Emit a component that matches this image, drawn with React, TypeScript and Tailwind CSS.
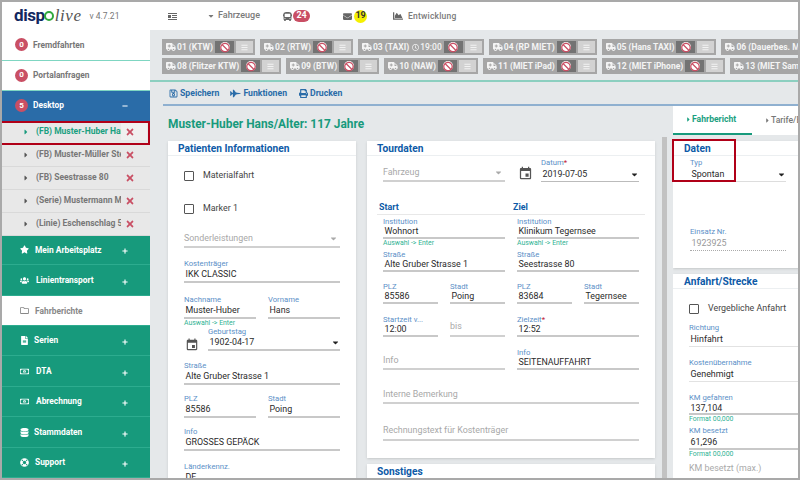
import type { ReactNode } from "react";
import {
  FaAmbulance,
  FaBan,
  FaBars,
  FaBus,
  FaCaretDown,
  FaCaretRight,
  FaChartArea,
  FaDatabase,
  FaEnvelope,
  FaFighterJet,
  FaFileAlt,
  FaLifeRing,
  FaMinus,
  FaPlus,
  FaPrint,
  FaRegClock,
  FaRegFolder,
  FaRegMoneyBillAlt,
  FaRegSave,
  FaStar,
  FaTimes,
  FaUsers,
} from "react-icons/fa";
import { MdEvent } from "react-icons/md";

const DESKTOP_ITEMS = [
  "(FB) Muster-Huber Hans",
  "(FB) Muster-Müller Stefan",
  "(FB) Seestrasse 80",
  "(Serie) Mustermann Max",
  "(Linie) Eschenschlag 5",
];

const ROW_ONE = [
  { name: "01 (KTW)" },
  { name: "02 (RTW)" },
  { name: "03 (TAXI)", time: "19:00" },
  { name: "04 (RP MIET)" },
  { name: "05 (Hans TAXI)" },
  { name: "06 (Dauerbes. MIET)" },
];

const ROW_TWO = [
  { name: "08 (Flitzer KTW)" },
  { name: "09 (BTW)" },
  { name: "10 (NAW)" },
  { name: "11 (MIET iPad)" },
  { name: "12 (MIET iPhone)" },
  { name: "13 (MIET Samsung)" },
];

function Badge({ value }: { value: number }) {
  return (
    <span className="flex h-[13px] w-[13px] shrink-0 items-center justify-center rounded-full bg-[#c94f64] text-[8px] font-bold text-white">
      {value}
    </span>
  );
}

function GreenRow({ icon, label, h, gap }: { icon: ReactNode; label: string; h: string; gap: string }) {
  return (
    <div className={`flex items-center border-b border-[#2dac8f] bg-[#179a7c] pl-[16px] pr-[22px] text-[8.4px] font-bold text-white ${h}`}>
      <span className="flex w-[12px] justify-center text-[9px]">{icon}</span>
      <span className={gap}>{label}</span>
      <FaPlus className="mt-[3px] ml-auto text-[6px]" />
    </div>
  );
}

function Sidebar() {
  return (
    <aside className="flex w-[148px] shrink-0 flex-col bg-white">
      <div className="flex h-[28px] items-center pl-[12px]">
        <span className="text-[17px] leading-none font-bold tracking-tight text-[#12275f]">disp</span>
        <span className="-ml-px h-[10px] w-[10px] rounded-full border-2 border-[#31a83c]" />
        <span className="ml-px font-['Liberation_Serif'] text-[17px] leading-none tracking-[0.6px] text-[#555] italic">live</span>
        <span className="ml-[8px] text-[8.5px] text-[#777]">v 4.7.21</span>
      </div>
      <div className="flex h-[31px] items-center gap-[5px] border-b border-[#7fd6c2] pl-[13px] text-[8.4px] font-bold text-[#777]">
        <Badge value={0} />
        Fremdfahrten
      </div>
      <div className="flex h-[30px] items-center gap-[5px] border-b border-[#7fd6c2] pl-[13px] text-[8.4px] font-bold text-[#777]">
        <Badge value={0} />
        Portalanfragen
      </div>
      <div className="flex h-[30px] items-center gap-[5px] bg-[#2a6ca8] pl-[13px] pr-[22px] text-[8.4px] font-bold text-white">
        <Badge value={5} />
        Desktop
        <FaMinus className="ml-auto text-[6px]" />
      </div>
      {DESKTOP_ITEMS.map((item, i) => (
        <div key={item} className="flex h-[23px] items-center border-b border-[#d9d9d9] bg-[#e8e8e8] pl-[20px]">
          <FaCaretRight className={`shrink-0 text-[8px] ${i === 0 ? "text-[#179a7c]" : "text-[#555]"}`} />
          <span className={`ml-[6px] w-[85px] shrink-0 overflow-hidden text-[8.5px] font-bold whitespace-nowrap ${i === 0 ? "text-[#1aa080]" : "text-[#777]"}`}>
            {item}
          </span>
          <span className={`flex h-[17px] w-[26px] items-center pl-[4px] ${i === 0 ? "bg-[#f0f0f0]" : ""}`}>
            <FaTimes className="text-[10px] text-[#c94f64]" />
          </span>
        </div>
      ))}
      <GreenRow h="h-[30px]" gap="ml-[5px]" icon={<FaStar />} label="Mein Arbeitsplatz" />
      <GreenRow h="h-[31px]" gap="ml-[6px]" icon={<FaUsers />} label="Linientransport" />
      <div className="flex h-[30px] items-center border-b border-[#2dac8f] bg-white pl-[16px] text-[8.4px] font-bold text-[#888]">
        <span className="flex w-[12px] justify-center text-[9px]">
          <FaRegFolder />
        </span>
        <span className="ml-[5px]">Fahrberichte</span>
      </div>
      <GreenRow h="h-[30px]" gap="ml-[4px]" icon={<FaFileAlt />} label="Serien" />
      <GreenRow h="h-[31px]" gap="ml-[6px]" icon={<FaRegMoneyBillAlt />} label="DTA" />
      <GreenRow h="h-[30px]" gap="ml-[6px]" icon={<FaRegMoneyBillAlt />} label="Abrechnung" />
      <GreenRow h="h-[31px]" gap="ml-[4px]" icon={<FaDatabase />} label="Stammdaten" />
      <GreenRow h="h-[30px]" gap="ml-[5px]" icon={<FaLifeRing />} label="Support" />
    </aside>
  );
}

function TopBar() {
  return (
    <div className="flex h-[28px] shrink-0 items-center bg-white text-[9px] font-medium text-[#7a7a7a]">
      <svg viewBox="0 0 9 7" className="ml-[18px] h-[7px] w-[9px]" fill="#666">
        <rect x="0" y="0" width="9" height="1" />
        <rect x="0" y="2" width="3" height="3" />
        <rect x="4" y="2" width="5" height="1" />
        <rect x="4" y="4" width="5" height="1" />
        <rect x="0" y="6" width="9" height="1" />
      </svg>
      <FaCaretDown className="ml-[30px] text-[8px]" />
      <span className="ml-[3px]">Fahrzeuge</span>
      <FaBus className="ml-[23px] text-[9px] text-[#666]" />
      <span className="ml-px flex h-[12px] w-[17px] items-center justify-center rounded-full bg-[#c94f64] text-[9px] font-bold text-white">24</span>
      <FaEnvelope className="ml-[33px] text-[9px] text-[#666]" />
      <span className="ml-[2px] flex h-[13px] w-[13px] items-center justify-center rounded-full bg-[#f5f000] text-[9px] font-bold text-[#333]">19</span>
      <FaChartArea className="ml-[26px] text-[10px] text-[#666]" />
      <span className="ml-[5px] text-[8.5px] tracking-[0.2px]">Entwicklung</span>
    </div>
  );
}

function Chip({ name, time }: { name: string; time?: string }) {
  return (
    <div className="flex h-[16px] shrink-0 items-center bg-[#a6a6a6] pl-[4px] text-[8.5px] font-bold whitespace-nowrap text-[#f4f4f4]">
      <FaAmbulance className="mr-px text-[10px]" />
      <span>{name}</span>
      {time && (
        <span className="ml-[3px] flex items-center gap-[1px] font-medium">
          <FaRegClock className="text-[7px]" />
          {time}
        </span>
      )}
      <span className="ml-[2px] flex h-[12px] w-[19px] items-center justify-center bg-[#737373]">
        <span className="flex h-[10px] w-[10px] items-center justify-center rounded-full bg-white">
          <FaBan className="text-[11px] text-[#c94f64]" />
        </span>
      </span>
      <span className="mx-[2px] flex h-[12px] w-[17px] items-center justify-center bg-[#d2d2d2] text-[#f2f2f2]">
        <FaBars className="text-[7px]" />
      </span>
    </div>
  );
}

function Field({
  label,
  value,
  className = "",
  lineClass = "border-b-2 border-[#c8c8c8]",
  hint,
  required,
  caret,
  tight,
  valueClass = "text-[#2a2a2a]",
}: {
  label?: string;
  value?: string;
  className?: string;
  lineClass?: string;
  hint?: string;
  required?: boolean;
  caret?: boolean;
  tight?: boolean;
  valueClass?: string;
}) {
  return (
    <div className={className}>
      <div className="h-[10px] text-[7.7px] leading-[10px] whitespace-nowrap text-[#5b8fc7]">
        {label}
        {required && <span className="text-[#c0152f]">*</span>}
      </div>
      <div className={`flex items-center pl-[1.5px] text-[8.9px] whitespace-nowrap ${tight ? "h-[12px]" : "h-[14px]"} ${lineClass} ${valueClass}`}>
        {value}
        {caret && <FaCaretDown className="ml-auto text-[9px] text-[#222]" />}
      </div>
      {hint && <div className="h-[8px] text-[6.9px] leading-[8px] text-[#2fb394]">{hint}</div>}
    </div>
  );
}

function Empty({ label, className = "", caret }: { label: string; className?: string; caret?: boolean }) {
  return (
    <div className={`flex items-center border-b-2 border-[#d0d0d0] pb-[2px] text-[8.9px] text-[#a8a8a8] ${className}`}>
      {label}
      {caret && <FaCaretDown className="ml-auto mr-[2px] text-[9px] text-[#aaa]" />}
    </div>
  );
}

function CardHead({ title, pl = "pl-[10px]" }: { title: string; pl?: string }) {
  return <div className={`flex h-[15px] items-center border-b border-[#eceff1] pt-[2px] text-[10.2px] font-bold text-[#0d5aa7] ${pl}`}>{title}</div>;
}

function Check({ label, className = "" }: { label: string; className?: string }) {
  return (
    <div className={`flex items-center text-[8.9px] text-[#444] ${className}`}>
      <span className="mr-[9px] h-[10px] w-[10px] rounded-[1px] border-[1.5px] border-[#555]" />
      {label}
    </div>
  );
}

function PatientCard() {
  return (
    <section className="h-[400px] w-[188px] shrink-0 bg-white px-[16px] shadow-sm">
      <div className="-mx-[16px]">
        <CardHead title="Patienten Informationen" />
      </div>
      <Check label="Materialfahrt" className="mt-[13px]" />
      <Check label="Marker 1" className="mt-[20px]" />
      <Empty label="Sonderleistungen" caret className="mt-[17px] h-[15px]" />
      <Field label="Kostenträger" value="IKK CLASSIC" className="mt-[11px]" />
      <div className="mt-[12px] grid grid-cols-[72px_72px] gap-x-[12px]">
        <Field label="Nachname" value="Muster-Huber" hint="Auswahl -> Enter" />
        <Field label="Vorname" value="Hans" />
      </div>
      <div className="flex items-end">
        <MdEvent className="mb-[-1px] mr-[9px] ml-[1px] shrink-0 text-[14px] text-[#555]" />
        <Field label="Geburtstag" value="1902-04-17" caret className="flex-1" />
      </div>
      <Field label="Straße" value="Alte Gruber Strasse 1" className="mt-[10px]" />
      <div className="mt-[9px] grid grid-cols-[72px_72px] gap-x-[12px]">
        <Field label="PLZ" value="85586" />
        <Field label="Stadt" value="Poing" />
      </div>
      <Field label="Info" value="GROSSES GEPÄCK" className="mt-[9px]" />
      <Field label="Länderkennz." value="DE" className="mt-[11px]" />
    </section>
  );
}

function TourCard() {
  return (
    <div className="w-[288px] shrink-0">
      <section className="h-[317px] bg-white shadow-sm">
        <CardHead title="Tourdaten" />
        <div className="flex items-end px-[16px] pt-[2px]">
          <Empty label="Fahrzeug" caret className="h-[15px] w-[122px]" />
          <MdEvent className="mb-[1px] ml-[13px] mr-[8px] shrink-0 text-[15px] text-[#555]" />
          <Field label="Datum" required value="2019-07-05" caret className="flex-1" lineClass="border-b border-[#bbb]" />
        </div>
        <div className="mx-[10px] mt-[20px] flex h-[13px] items-center border-b border-[#e8e8e8] pl-[2px] text-[8.9px] font-bold text-[#0d5aa7]">
          <span className="w-[134px]">Start</span>
          <span>Ziel</span>
        </div>
        <div className="mt-[2px] grid grid-cols-[122px_122px] gap-x-[12px] pl-[16px]">
          <Field tight label="Institution" value="Wohnort" hint="Auswahl -> Enter" />
          <Field tight label="Institution" value="Klinikum Tegernsee" hint="Auswahl -> Enter" />
          <Field tight label="Straße" value="Alte Gruber Strasse 1" className="mt-[3px]" />
          <Field tight label="Straße" value="Seestrasse 80" className="mt-[3px]" />
          <div className="col-span-2 mt-[10px] grid grid-cols-[55px_55px_55px_55px] gap-x-[12px]">
            <Field tight label="PLZ" value="85586" />
            <Field tight label="Stadt" value="Poing" />
            <Field tight label="PLZ" value="83684" />
            <Field tight label="Stadt" value="Tegernsee" />
          </div>
          <div className="col-span-2 mt-[11px] grid grid-cols-[55px_55px_122px] items-end gap-x-[12px]">
            <Field tight label="Startzeit v..." value="12:00" />
            <Empty label="bis" className="h-[16px]" />
            <Field tight label="Zielzeit" required value="12:52" />
          </div>
          <Empty label="Info" className="mt-[11px] h-[15px] self-end" />
          <Field tight label="Info" value="SEITENAUFFAHRT" className="mt-[11px]" />
          <Empty label="Interne Bemerkung" className="col-span-2 mt-[19px] h-[15px]" />
          <Empty label="Rechnungstext für Kostenträger" className="col-span-2 mt-[21px] h-[16px]" />
        </div>
      </section>
      <section className="mt-[6px] h-[40px] bg-white shadow-sm">
        <CardHead title="Sonstiges" />
      </section>
    </div>
  );
}

function RightColumn() {
  return (
    <div className="min-w-0 flex-1 overflow-hidden">
      <div className="flex h-[29px] bg-white text-[8.6px] font-bold">
        <div className="flex w-[79px] shrink-0 items-center border-b-2 border-[#179a7c] pl-[12px] text-[#1aa080]">
          <FaCaretRight className="text-[7px]" />
          Fahrbericht
        </div>
        <div className="ml-[12px] flex shrink-0 items-center whitespace-nowrap font-medium text-[#777]">
          <FaCaretRight className="text-[7px]" />
          Tarife/Extras
        </div>
      </div>
      <section className="mt-[6px] h-[127px] w-[140px] bg-white pl-[17px] shadow-sm">
        <div className="-ml-[17px]">
          <CardHead title="Daten" pl="pl-[11px]" />
        </div>
        <Field label="Typ" value="Spontan" caret className="mt-[2px] w-[96px]" lineClass="border-b border-[#ddd]" />
        <Field
          label="Einsatz Nr."
          value="1923925"
          className="mt-[45px] w-[96px]"
          valueClass="text-[#999]"
          lineClass="border-b border-dotted border-[#aaa]"
        />
      </section>
      <section className="mt-[6px] h-[210px] w-[140px] bg-white pl-[16px] shadow-sm">
        <div className="-ml-[16px]">
          <CardHead title="Anfahrt/Strecke" pl="pl-[11px]" />
        </div>
        <Check label="Vergebliche Anfahrt" className="mt-[13px]" />
        <Field label="Richtung" value="Hinfahrt" className="mt-[8px]" lineClass="border-b border-[#e2e2e2]" />
        <Field label="Kostenübernahme" value="Genehmigt" className="mt-[11px]" lineClass="border-b border-[#e2e2e2]" />
        <Field tight label="KM gefahren" value="137,104" hint="Format 00,000" className="mt-[11px]" />
        <Field label="KM besetzt" value="61,296" hint="Format 00,000" className="mt-[3px]" />
        <div className="mt-[4px] text-[8.9px] text-[#aaa]">KM besetzt (max.)</div>
      </section>
    </div>
  );
}

export default function App() {
  return (
    <div className="relative box-border flex h-[480px] w-[800px] overflow-hidden border-2 border-[#a9a9a9] bg-[#e5e8ea] font-['Roboto',sans-serif]">
      <Sidebar />
      <main className="flex min-w-0 flex-1 flex-col">
        <TopBar />
        <div className="h-[50px] shrink-0 overflow-hidden pl-[12px] pt-[9px]">
          <div className="flex gap-[5px]">
            {ROW_ONE.map((c) => (
              <Chip key={c.name} name={c.name} time={c.time} />
            ))}
          </div>
          <div className="mt-[3px] flex gap-[5px]">
            {ROW_TWO.map((c) => (
              <Chip key={c.name} name={c.name} />
            ))}
          </div>
        </div>
        <div className="h-[2px] shrink-0 bg-[#8ccfc0]" />
        <div className="flex h-[22px] shrink-0 items-center pl-[19px] pt-px text-[8.7px] font-bold text-[#2a6ca8]">
          <FaRegSave className="mr-[2px] text-[9px]" />
          Speichern
          <FaFighterJet className="ml-[11px] mr-[2px] text-[11px]" />
          Funktionen
          <FaPrint className="ml-[12px] mr-[2px] text-[9px]" />
          Drucken
        </div>
        <div className="ml-[13px] h-[2px] shrink-0 bg-[#8fb0d0]" />
        <div className="flex min-h-0 flex-1">
          <div className="w-[523px] shrink-0">
            <h1 className="flex h-[35px] items-center pl-[18px] pt-[2px] text-[11.9px] font-bold text-[#179a7c]">Muster-Huber Hans/Alter: 117 Jahre</h1>
            <div className="flex pl-[18px]">
              <PatientCard />
              <div className="ml-[11px]">
                <TourCard />
              </div>
              <div className="mt-[-4px] ml-[7px] h-[400px] w-[5px] bg-[#c2c2c2]" />
            </div>
          </div>
          <RightColumn />
        </div>
      </main>
      {/* annotation boxes sit over the page */}
      <div className="absolute top-[119px] -left-[2px] h-[24px] w-[150px] border-2 border-[#b00018]" />
      <div className="absolute top-[137px] left-[670px] h-[43px] w-[64px] border-2 border-[#b00018]" />
    </div>
  );
}
